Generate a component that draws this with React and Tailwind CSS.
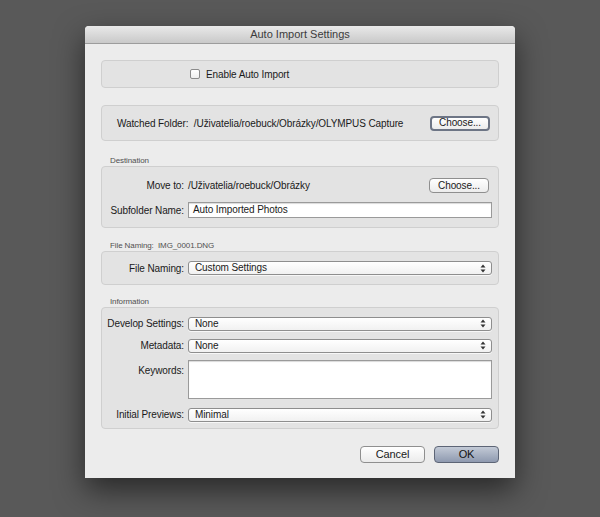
import { useState } from "react";

const FONT = { fontFamily: '"Liberation Sans", Arial, sans-serif' };

// tiny up/down arrow pair used by popup menus
function Stepper() {
  return (
    <svg width="6" height="9" viewBox="0 0 6 9" className="shrink-0">
      <path d="M3 0.5 L5.5 3.5 L0.5 3.5 Z" fill="#333" />
      <path d="M3 8.5 L5.5 5.5 L0.5 5.5 Z" fill="#333" />
    </svg>
  );
}

function Popup({ value }) {
  return (
    <div className="flex items-center justify-between h-[14px] flex-1 rounded-[3px] border border-[#8e8e8e] bg-gradient-to-b from-white to-[#f1f1f1] pl-[6px] pr-[5px] text-[10px] leading-none text-[#1a1a1a] shadow-[0_1px_0_rgba(255,255,255,0.7)]">
      <span>{value}</span>
      <Stepper />
    </div>
  );
}

function PushButton({ children, focused, className = "" }) {
  return (
    <button
      className={`h-[15px] rounded-[4px] bg-gradient-to-b from-white to-[#ececec] text-[10px] leading-none text-[#1a1a1a] ${
        focused ? "border-2 border-[#6d7585]" : "border border-[#8f8f8f]"
      } ${className}`}
    >
      {children}
    </button>
  );
}

function Group({ children, className = "" }) {
  return (
    <div className={`rounded-[4px] border border-[#cfcfcf] bg-[#e3e3e3] ${className}`}>
      {children}
    </div>
  );
}

function Caption({ children }) {
  return <div className="h-[12px] pl-[9px] text-[8px] leading-[14px] text-[#505050] whitespace-pre">{children}</div>;
}

function Row({ label, children, className = "" }) {
  return (
    <div className={`flex items-center ${className}`}>
      <div className="w-[86px] shrink-0 pr-[4px] text-right text-[10px] whitespace-nowrap text-[#1a1a1a]">{label}</div>
      {children}
    </div>
  );
}

export default function App() {
  const [enabled, setEnabled] = useState(false);

  return (
    <div className="min-h-[517px] bg-[#595959] flex justify-center pt-[26px] tracking-[-0.1px]" style={FONT}>
      <div className="w-[430px] h-[452px] flex flex-col rounded-t-[4px] bg-[#ececec] shadow-[0_12px_30px_rgba(0,0,0,0.55)] overflow-hidden">
        {/* title bar */}
        <div className="h-[18px] shrink-0 flex items-center justify-center bg-gradient-to-b from-[#e9e9e9] to-[#c9c9c9] border-b border-[#9c9c9c] text-[11px] tracking-normal text-[#3c3c3c]">
          Auto Import Settings
        </div>

        <div className="flex flex-col pl-[16px] pr-[16px] pt-[16px]">
          {/* enable */}
          <Group className="h-[28px] flex items-center pl-[88px]">
            <label className="flex items-center gap-[6px] text-[10px] text-[#1a1a1a]">
              <span
                onClick={() => setEnabled(!enabled)}
                className="w-[10px] h-[10px] rounded-[2px] border border-[#8a8a8a] bg-gradient-to-b from-white to-[#eeeeee] flex items-center justify-center text-[8px] leading-none"
              >
                {enabled ? "✓" : ""}
              </span>
              Enable Auto Import
            </label>
          </Group>

          {/* watched folder */}
          <Group className="mt-[17px] h-[36px] flex items-center justify-between pl-[15px] pr-[8px]">
            <span className="text-[10px] text-[#1a1a1a] whitespace-pre">
              Watched Folder:  /Uživatelia/roebuck/Obrázky/OLYMPUS Capture
            </span>
            <PushButton focused className="w-[60px]">Choose...</PushButton>
          </Group>

          {/* destination */}
          <div className="mt-[13px]">
            <Caption>Destination</Caption>
          </div>
          <Group className="h-[62px] flex flex-col pt-[11px] pr-[6px]">
            <Row label="Move to:">
              <span className="flex-1 text-[10px] text-[#1a1a1a]">/Uživatelia/roebuck/Obrázky</span>
              <PushButton className="w-[60px] mr-[3px]">Choose...</PushButton>
            </Row>
            <Row label="Subfolder Name:" className="mt-[9px]">
              <div className="flex-1 h-[16px] border border-[#9a9a9a] bg-white pl-[4px] text-[10px] leading-[14px] text-[#1a1a1a] shadow-[inset_0_1px_1px_rgba(0,0,0,0.15)]">
                Auto Imported Photos
              </div>
            </Row>
          </Group>

          {/* file naming */}
          <div className="mt-[11px]">
            <Caption>File Naming:  IMG_0001.DNG</Caption>
          </div>
          <Group className="h-[34px] flex flex-col justify-center pr-[6px]">
            <Row label="File Naming:">
              <Popup value="Custom Settings" />
            </Row>
          </Group>

          {/* information */}
          <div className="mt-[10px]">
            <Caption>Information</Caption>
          </div>
          <Group className="h-[122px] flex flex-col pt-[8px] pr-[6px]">
            <Row label="Develop Settings:">
              <Popup value="None" />
            </Row>
            <Row label="Metadata:" className="mt-[7px]">
              <Popup value="None" />
            </Row>
            <div className="flex mt-[7px]">
              <div className="w-[86px] shrink-0 pr-[4px] pt-[3px] text-right text-[10px] text-[#1a1a1a]">Keywords:</div>
              <div className="flex-1 h-[39px] border border-[#9a9a9a] bg-white shadow-[inset_0_1px_1px_rgba(0,0,0,0.15)]" />
            </div>
            <Row label="Initial Previews:" className="mt-[8px]">
              <Popup value="Minimal" />
            </Row>
          </Group>

          {/* actions */}
          <div className="mt-[17px] flex justify-end gap-[9px]">
            <button className="w-[65px] h-[17px] rounded-[4px] border border-[#8f8f8f] bg-gradient-to-b from-white to-[#ebebeb] text-[11px] leading-none text-[#1a1a1a]">
              Cancel
            </button>
            <button className="w-[65px] h-[17px] rounded-[4px] border border-[#5d6576] bg-gradient-to-b from-[#c3cad6] to-[#8f9ab0] text-[11px] leading-none text-[#111]">
              OK
            </button>
          </div>
        </div>
      </div>
    </div>
  );
}
